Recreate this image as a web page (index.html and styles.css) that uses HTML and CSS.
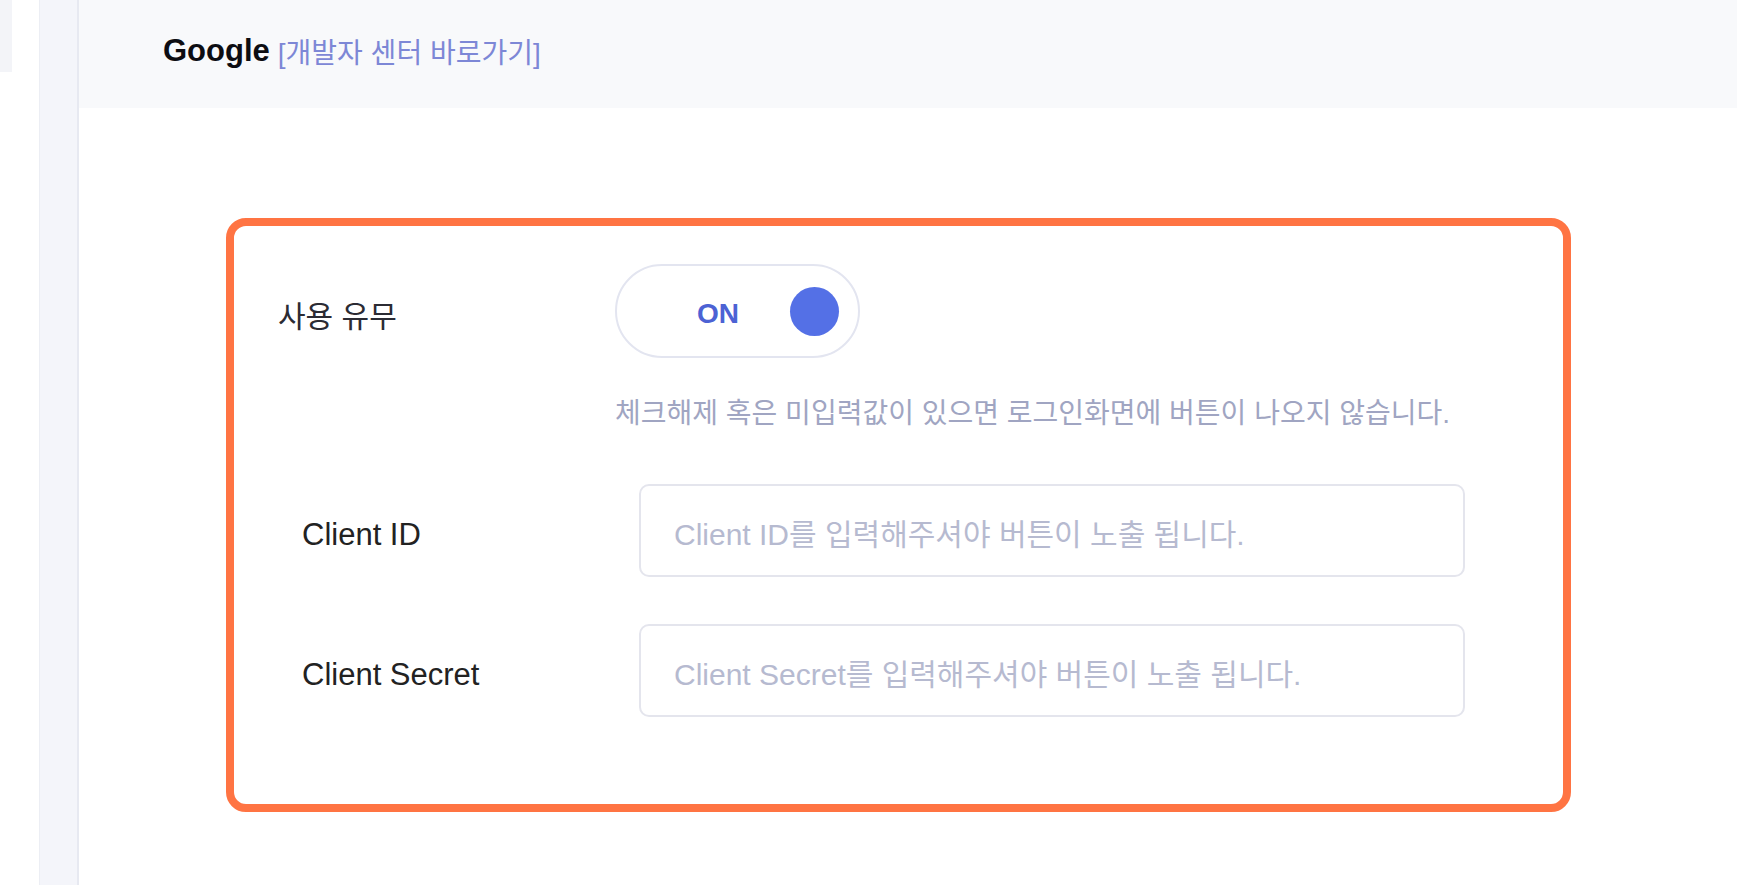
FILE: index.html
```html
<!DOCTYPE html>
<html lang="ko">
<head>
    <meta charset="UTF-8">
    <meta name="viewport" content="width=device-width, initial-scale=1.0">
    <title>소셜 로그인 설정</title>
    <link rel="stylesheet" href="styles.css">
</head>
<body>
    <div class="layout">
        <div class="edge">
            <div class="edge-tab"></div>
        </div>
        <div class="rail"></div>

        <main class="main">
            <div class="page-head">
                <span class="provider">Google</span>
                <a href="#" class="dev-link">[개발자 센터 바로가기]</a>
            </div>

            <div class="content">
                <section class="setting-box">
                    <div class="toggle-row">
                        <div class="row-label">사용 유무</div>
                        <div class="switch">
                            <span class="switch-text">ON</span>
                            <span class="switch-knob"></span>
                        </div>
                    </div>
                    <p class="help-text">체크해제 혹은 미입력값이 있으면 로그인화면에 버튼이 나오지 않습니다.</p>

                    <div class="fields">
                        <div class="field-row">
                            <label class="field-label" for="clientId">Client ID</label>
                            <input type="text" id="clientId" class="field-input" placeholder="Client ID를 입력해주셔야 버튼이 노출 됩니다.">
                        </div>
                        <div class="field-row">
                            <label class="field-label" for="clientSecret">Client Secret</label>
                            <input type="text" id="clientSecret" class="field-input" placeholder="Client Secret를 입력해주셔야 버튼이 노출 됩니다.">
                        </div>
                    </div>
                </section>
            </div>
        </main>
    </div>
</body>
</html>
```

FILE: styles.css
```css
body {
    margin: 0;
    font-family: "Liberation Sans", "Noto Sans CJK KR", sans-serif;
    background-color: white;
    color: #222;
}
.layout {
    display: flex;
    min-height: 885px;
}
.edge {
    width: 39px;
    flex-shrink: 0;
}
.edge-tab {
    width: 12px;
    height: 72px;
    background-color: #f3f4f8;
}
.rail {
    width: 37px;
    flex-shrink: 0;
    background-color: #f4f5fa;
    border-left: 1px solid #eceef4;
    border-right: 2px solid #e7e9f1;
}
.main {
    flex: 1;
}
.page-head {
    height: 108px;
    box-sizing: border-box;
    padding: 0 0 6px 84px;
    background-color: #f8f9fb;
    display: flex;
    align-items: center;
    gap: 8px;
}
.provider {
    font-size: 31px;
    font-weight: bold;
    color: #0d0d12;
}
.dev-link {
    font-size: 28px;
    color: #7d87d6;
    text-decoration: none;
}
.content {
    padding: 110px 0 40px 147px;
}
.setting-box {
    width: 1345px;
    height: 594px;
    box-sizing: border-box;
    border: 8px solid #ff7443;
    border-radius: 20px;
    padding: 38px 0 0 44px;
}
.toggle-row {
    display: flex;
    align-items: center;
}
.row-label {
    width: 337px;
    padding-top: 5px;
    font-size: 30px;
    color: #2b2b33;
}
.switch {
    width: 245px;
    height: 94px;
    box-sizing: border-box;
    border: 2px solid #e3e5f0;
    border-radius: 47px;
    display: flex;
    align-items: center;
    justify-content: flex-end;
    gap: 51px;
    padding-right: 19px;
}
.switch-text {
    padding-top: 6px;
    font-size: 28px;
    font-weight: bold;
    color: #4c62d4;
}
.switch-knob {
    width: 49px;
    height: 49px;
    border-radius: 50%;
    background-color: #5470e6;
}
.help-text {
    margin: 36px 0 0 337px;
    font-size: 28px;
    line-height: 40px;
    color: #a0a5c2;
}
.fields {
    margin-top: 50px;
    padding-left: 24px;
    display: flex;
    flex-direction: column;
    gap: 47px;
}
.field-row {
    display: flex;
    align-items: center;
}
.field-label {
    width: 337px;
    padding-top: 8px;
    font-size: 31px;
    color: #222;
}
.field-input {
    width: 826px;
    height: 93px;
    box-sizing: border-box;
    border: 2px solid #e4e5ed;
    border-radius: 10px;
    padding: 8px 20px 0 33px;
    font-family: "Liberation Sans", "Noto Sans CJK KR", sans-serif;
    font-size: 30px;
    color: #333;
    outline: none;
}
.field-input::placeholder {
    color: #b6bad0;
}
```
